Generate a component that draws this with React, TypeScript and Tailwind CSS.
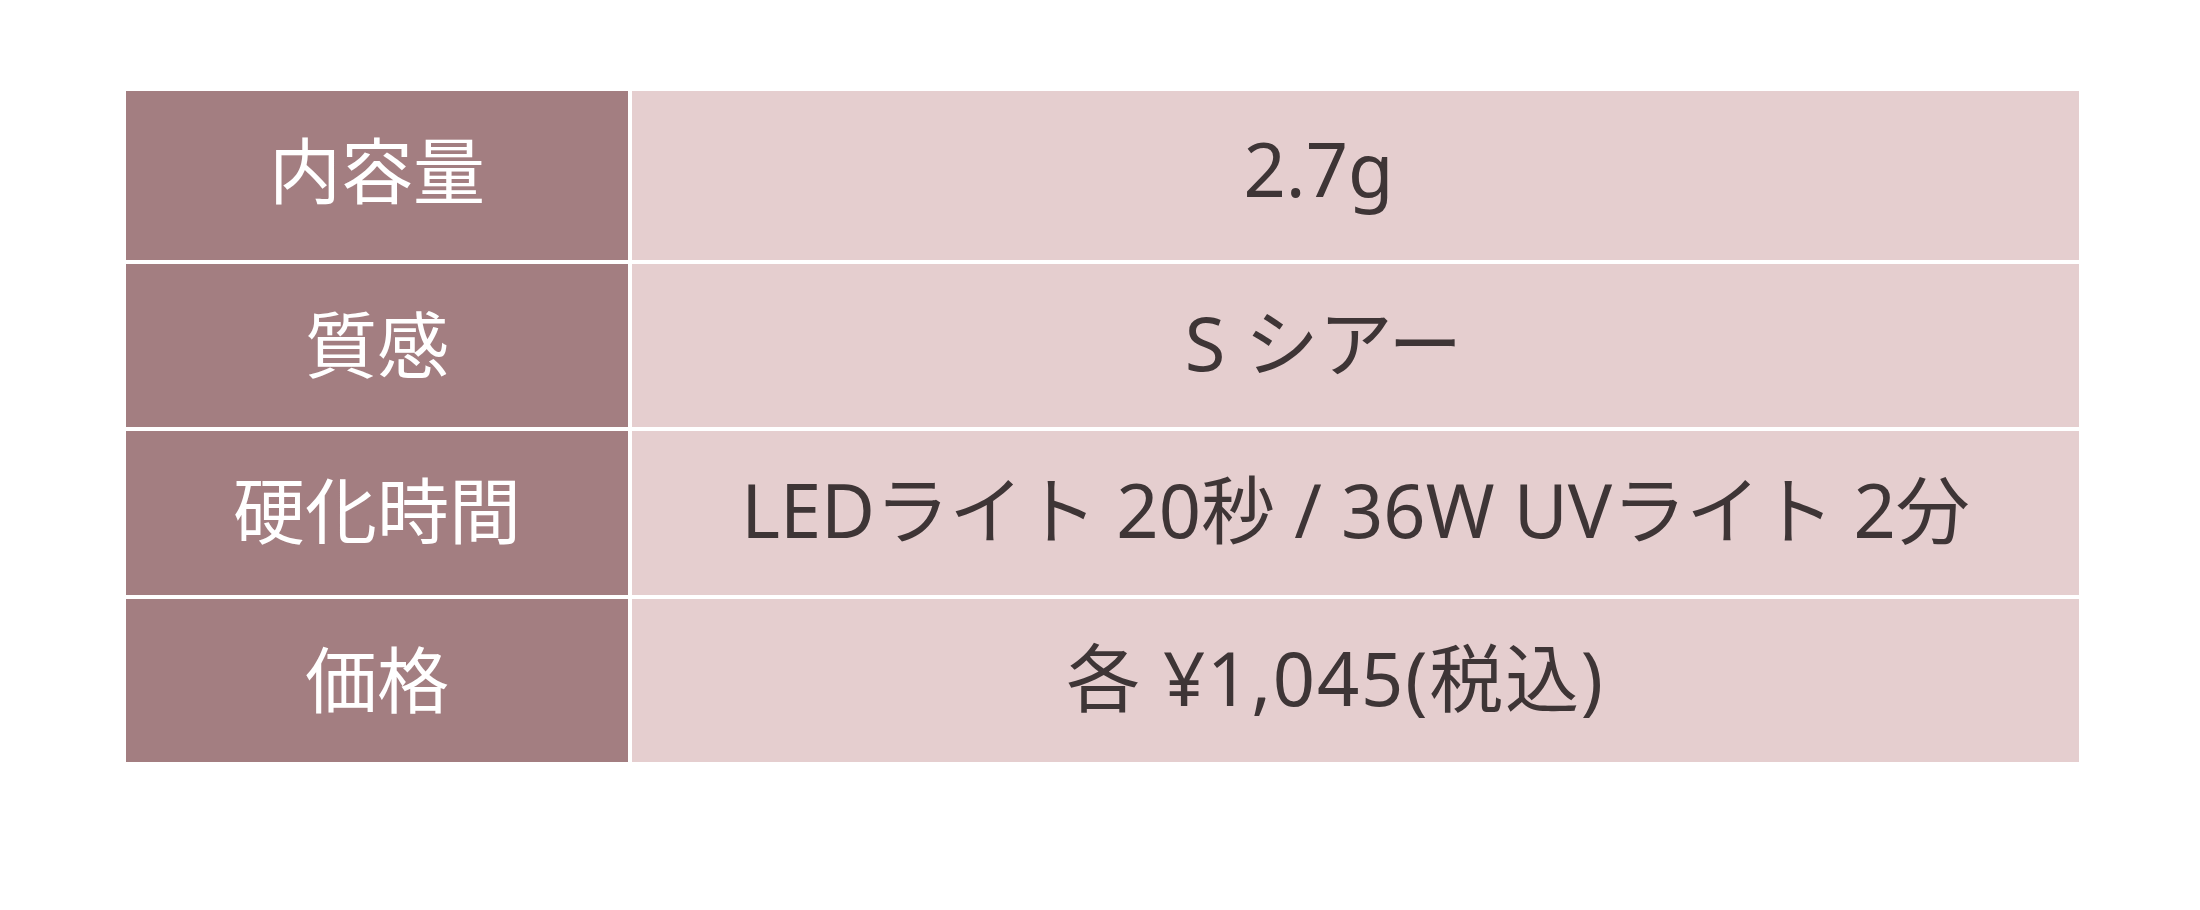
const ROWS = [
  { label: "内容量", value: "2.7g", h: "h-[169px]", labelPb: "pb-[12px]", valuePb: "pb-[14px]", extra: "pr-[74px]" },
  { label: "質感", value: "S シアー", h: "h-[163px]", labelPb: "pb-[4px]", valuePb: "pb-[6px]", extra: "pr-[64px]" },
  { label: "硬化時間", value: "LEDライト 20秒 / 36W UVライト 2分", h: "h-[164px]", labelPb: "pb-[6px]", valuePb: "pb-[6px]", extra: "pr-0" },
  { label: "価格", value: "各 ¥1,045(税込)", h: "h-[163px]", labelPb: "pb-[4px]", valuePb: "pb-[6px]", extra: "pr-[40px] tracking-[1.8px]" },
];

export default function App() {
  return (
    <div className="w-[2200px] h-[910px] bg-white pt-[91px] pl-[126px] font-['Noto_Sans','Noto_Sans_CJK_JP',sans-serif]">
      <div className="w-[1953px] flex flex-col gap-[4px]">
        {ROWS.map((row) => (
          <div key={row.label} className={`flex gap-[4px] ${row.h}`}>
            <div className={`w-[502px] shrink-0 bg-[#a37e81] flex items-center justify-center text-white text-[72px] leading-none ${row.labelPb}`}>
              {row.label}
            </div>
            <div
              className={`flex-1 bg-[#e5cecf] flex items-center justify-center text-[#3e3536] text-[74px] leading-none ${row.valuePb} ${row.extra}`}
            >
              {row.value}
            </div>
          </div>
        ))}
      </div>
    </div>
  );
}
